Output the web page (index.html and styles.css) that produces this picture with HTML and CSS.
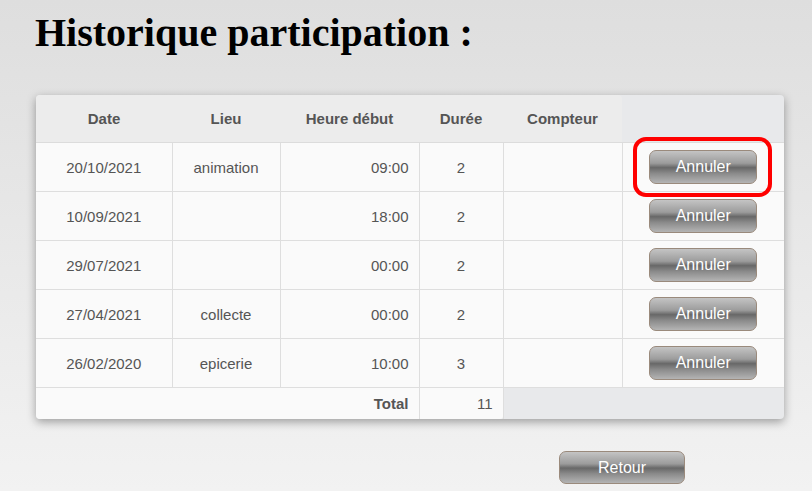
FILE: index.html
```html
<!DOCTYPE html>
<html lang="fr">
<head>
<meta charset="utf-8">
<title>Historique participation</title>
<link rel="stylesheet" href="styles.css">
</head>
<body>
<h1 class="title">Historique participation :</h1>
<div class="panel">
  <table class="grid">
    <colgroup>
      <col class="c-date"><col class="c-lieu"><col class="c-heure"><col class="c-duree"><col class="c-cpt"><col class="c-act">
    </colgroup>
    <thead>
      <tr>
        <th class="first">Date</th><th>Lieu</th><th>Heure début</th><th>Durée</th><th class="lasthead">Compteur</th><th class="empty"></th>
      </tr>
    </thead>
    <tbody>
      <tr><td>20/10/2021</td><td>animation</td><td class="r">09:00</td><td>2</td><td></td><td class="act"><span class="hl"><button class="btn">Annuler</button></span></td></tr>
      <tr><td>10/09/2021</td><td></td><td class="r">18:00</td><td>2</td><td></td><td class="act"><button class="btn">Annuler</button></td></tr>
      <tr><td>29/07/2021</td><td></td><td class="r">00:00</td><td>2</td><td></td><td class="act"><button class="btn">Annuler</button></td></tr>
      <tr><td>27/04/2021</td><td>collecte</td><td class="r">00:00</td><td>2</td><td></td><td class="act"><button class="btn">Annuler</button></td></tr>
      <tr><td>26/02/2020</td><td>epicerie</td><td class="r">10:00</td><td>3</td><td></td><td class="act"><button class="btn">Annuler</button></td></tr>
      <tr class="total"><td colspan="3" class="r b">Total</td><td class="r sum">11</td><td class="none"></td><td class="none"></td></tr>
    </tbody>
  </table>
</div>
<div class="footer"><button class="btn retour">Retour</button></div>
</body>
</html>
```
FILE: styles.css
```css
html, body { margin: 0; height: 100%; }
body {
  background: linear-gradient(#dedede, #f2f2f2);
  font-family: "Liberation Sans", Arial, sans-serif;
  padding: 0 28px 0 36px;
  box-sizing: border-box;
}
.title {
  font-family: "Liberation Serif", "Times New Roman", serif;
  font-size: 40px;
  font-weight: bold;
  margin: 0 0 0 -1px;
  padding-top: 12px;
  line-height: 42px;
  color: #000;
}
.panel {
  margin-top: 41px;
  width: 748px;
  background: #e8e9eb;
  border-radius: 4px;
  box-shadow: 0 3px 10px rgba(0,0,0,0.35);
  overflow: hidden;
}
.grid {
  width: 100%;
  border-collapse: collapse;
  table-layout: fixed;
  font-size: 15px;
  color: #555;
}
.c-date { width: 136px; }
.c-lieu { width: 108px; }
.c-heure { width: 139px; }
.c-duree { width: 84px; }
.c-cpt { width: 119px; }
.c-act { width: 162px; }
th {
  background: #ececec;
  height: 47px;
  padding: 0;
  font-weight: bold;
  text-align: center;
  border-bottom: 1px solid #dcdcdc;
}
th.lasthead { border-top-right-radius: 4px; }
th.empty { background: transparent; }
td {
  background: #fafafa;
  height: 48px;
  padding: 0 10px;
  text-align: center;
  border: 1px solid #dedede;
  border-top: none;
}
td:first-child { border-left: none; }
td:last-child { border-right: none; }
td.r { text-align: right; }
td.b { font-weight: bold; }
.total td { height: 31px; border-bottom: none; }
.total td.sum { border-bottom-right-radius: 3px; }
.total td.none { background: transparent; border: none; }
.act { padding: 0; }
.hl { position: relative; display: inline-block; }
.hl::after {
  content: "";
  position: absolute;
  left: -16px; top: -13px; right: -15px; bottom: -13px;
  border: 4px solid #ff0000;
  border-radius: 13px;
}
.btn {
  display: inline-block;
  width: 108px;
  height: 34px;
  border: 1px solid #9a8a7c;
  border-radius: 7px;
  background: linear-gradient(#c4c4c4, #9c9c9c 38%, #686868 52%, #8a8a8a 70%, #b4b4b4);
  color: #fff;
  font-family: "Liberation Sans", Arial, sans-serif;
  font-size: 16px;
  padding: 0;
  vertical-align: middle;
}
.footer {
  width: 748px;
  display: flex;
  justify-content: flex-end;
  padding-right: 99px;
  box-sizing: border-box;
  margin-top: 32px;
}
.retour { width: 126px; height: 33px; }
```
